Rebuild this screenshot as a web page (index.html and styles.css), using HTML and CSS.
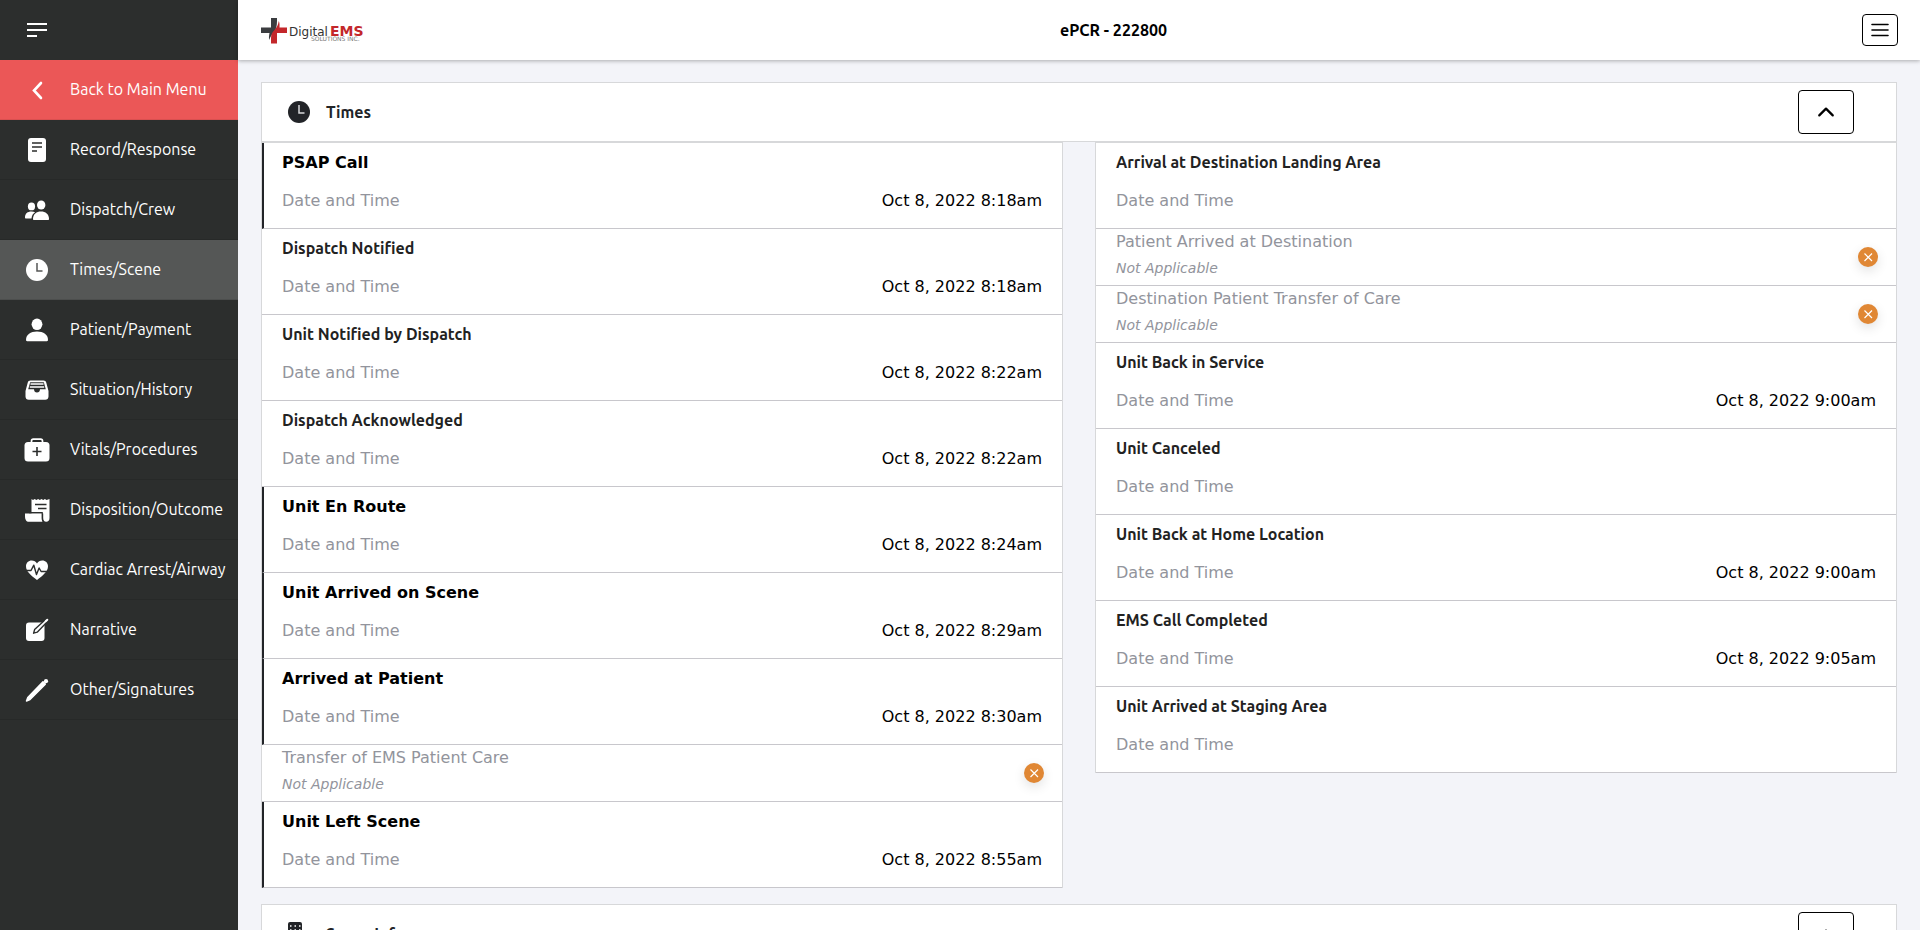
FILE: index.html
```html
<!DOCTYPE html>
<html lang="en">
<head>
<meta charset="utf-8">
<title>ePCR - 222800</title>
<link rel="stylesheet" href="styles.css">
</head>
<body>
<div class="app">
  <aside class="sidebar">
    <div class="sidebar-top">
      <button class="icon-button" type="button" aria-label="Toggle menu">
        <svg class="nav-icon" viewBox="0 0 24 24"><path d="M2 6h20M2 12h20M2 18h10" stroke="currentColor" stroke-width="2"/></svg>
      </button>
    </div>
    <nav class="nav">
      <a class="nav-item nav-back" href="#"><svg class="nav-icon" viewBox="0 0 24 24"><path d="M16 5l-7 7.500 7 7.500" fill="none" stroke="currentColor" stroke-width="2.600" stroke-linecap="round" stroke-linejoin="miter"/></svg><span class="nav-label">Back to Main Menu</span></a>
      <a class="nav-item" href="#"><svg class="nav-icon" viewBox="0 0 24 24"><rect x="3" y="0" width="18" height="24" rx="3" fill="currentColor"/><path d="M7 5h10M7 9h10M7 13h5" stroke="#2c2e2d" stroke-width="1.500"/></svg><span class="nav-label">Record/Response</span></a>
      <a class="nav-item" href="#"><svg class="nav-icon" viewBox="0 0 24 24"><g fill="currentColor"><ellipse cx="16.200" cy="7" rx="4.200" ry="4.500"/><path d="M8 21c0-5 3.500-7.500 8-7.500s8 2.500 8 7.500c0 .6-.4 1-1 1H9c-.6 0-1-.4-1-1z"/><ellipse cx="6.500" cy="8.400" rx="3.600" ry="3.900"/><path d="M0 19.500C0 15.500 2.500 13.500 6.500 13.500c1.500 0 2.600.3 3.600.8C7.800 15.700 6.800 17.800 6.500 20.500H1c-.6 0-1-.4-1-1z"/></g></svg><span class="nav-label">Dispatch/Crew</span></a>
      <a class="nav-item nav-active" href="#" aria-current="page"><svg class="nav-icon" viewBox="0 0 24 24"><circle cx="12" cy="12" r="11" fill="currentColor"/><path d="M12 5v8h5.500" fill="none" stroke="#555756" stroke-width="1.500"/></svg><span class="nav-label">Times/Scene</span></a>
      <a class="nav-item" href="#"><svg class="nav-icon" viewBox="0 0 24 24"><g fill="currentColor"><ellipse cx="12" cy="6.300" rx="5.400" ry="5.800"/><path d="M1 22c0-5.500 4.500-8.500 11-8.500S23 16.500 23 22c0 .7-.4 1.200-1.200 1.200H2.200C1.400 23.200 1 22.700 1 22z"/></g></svg><span class="nav-label">Patient/Payment</span></a>
      <a class="nav-item" href="#"><svg class="nav-icon" viewBox="0 0 24 24"><path d="M5.500 2.500h13c1.600 0 2.400.8 2.800 2.200L23.500 13v5.500c0 2-1.300 3.300-3.300 3.300H3.800c-2 0-3.300-1.300-3.300-3.300V13L2.700 4.700c.4-1.400 1.200-2.200 2.800-2.200z" fill="currentColor"/><path d="M5.200 4.200h13.600l2 7H15c0 2-1.200 3.300-3 3.300S9 13.200 9 11.200H3.200z" fill="#2c2e2d"/><path d="M5.500 6h13M4.800 9h14.400" stroke="currentColor" stroke-width="1.300"/></svg><span class="nav-label">Situation/History</span></a>
      <a class="nav-item" href="#"><svg class="nav-icon nav-icon-wide" viewBox="0 0 26 24"><path d="M7.500 5V3c0-1 .6-1.800 1.800-1.800h7.400c1.200 0 1.800.8 1.800 1.800v2" fill="none" stroke="currentColor" stroke-width="1.700"/><rect x="0.500" y="4" width="25" height="19.500" rx="3.500" fill="currentColor"/><path d="M13 9v9M8.500 13.500h9" stroke="#2c2e2d" stroke-width="1.600"/></svg><span class="nav-label">Vitals/Procedures</span></a>
      <a class="nav-item" href="#"><svg class="nav-icon" viewBox="0 0 24 24"><path d="M6.500 1l1.500 1 1.700-1 1.700 1 1.700-1 1.700 1 1.700-1 1.700 1 1.700-1 1.700 1L24.500 1v19c0 2.500-1.200 3.700-3.300 3.700s-3-1.500-3-3.700v-4.500H6.500z" fill="currentColor"/><path d="M10 6.500h11.500M13 10.500h8.500" stroke="#2c2e2d" stroke-width="1.400"/><path d="M0 15.500h17v4.800c0 1.500.3 2.500 1 3.500H4C1.200 23.800 0 21.500 0 18z" fill="currentColor"/><path d="M4 14.700h13.200v5.500c0 1.700.3 2.600 1 3.700" fill="none" stroke="#2c2e2d" stroke-width="1.200"/></svg><span class="nav-label">Disposition/Outcome</span></a>
      <a class="nav-item" href="#"><svg class="nav-icon" viewBox="0 0 24 24"><path d="M12 22C6 17.500 1 13.500 1 8.300 1 4.800 3.500 2.500 6.700 2.500c2.300 0 4.200 1 5.300 3 1.100-2 3-3 5.300-3C20.500 2.500 23 4.800 23 8.300 23 13.500 18 17.500 12 22z" fill="currentColor"/><path d="M0 12.500h6l2.800-5.300 2.700 9.300 2.600-6.500 2 3.500H24" fill="none" stroke="#2c2e2d" stroke-width="1.400" stroke-linejoin="round"/></svg><span class="nav-label">Cardiac Arrest/Airway</span></a>
      <a class="nav-item" href="#"><svg class="nav-icon" viewBox="0 0 24 24"><rect x="1" y="4.500" width="18.500" height="18.500" rx="3" fill="currentColor"/><path d="M8.600 15.200l1-3.600L20.500 1.500l2 2L12.200 14.200z" fill="currentColor" stroke="#2c2e2d" stroke-width="1.400" stroke-linejoin="round"/><path d="M20.700 3.300l1.600-1.600" stroke="currentColor" stroke-width="2" stroke-linecap="round"/></svg><span class="nav-label">Narrative</span></a>
      <a class="nav-item" href="#"><svg class="nav-icon" viewBox="0 0 24 24"><path d="M18 3.800l2.300 2.300L5 21.500l-3.500 1.500L2.800 19.500z" fill="currentColor" stroke="currentColor" stroke-width="1.500" stroke-linejoin="round"/><circle cx="21" cy="3.200" r="2.100" fill="currentColor"/></svg><span class="nav-label">Other/Signatures</span></a>
    </nav>
  </aside>
  <div class="content">
    <header class="topbar">
      <svg class="logo" viewBox="0 0 104 28" role="img" aria-label="DigitalEMS Solutions Inc.">
        <path d="M10 2h6v3c0 5-1 8.500-3 11-2 2.500-3.800 4.500-4.800 8-.6-3 0-5 .3-7H0v-5.500h10z" fill="#3b3d40"/>
        <path d="M16 27.500h-6V22c0-4 1.500-6 3.500-8C16 11.500 17 9 17.800 5c1 2.500.7 4.500.7 6.500H26V17H16z" fill="#c3272b"/>
        <text class="logo-name" x="28" y="20">Digital</text>
        <text class="logo-ems" x="69" y="20">EMS</text>
        <text class="logo-tag" x="50" y="25">SOLUTIONS INC.</text>
      </svg>
      <h1 class="page-title">ePCR - 222800</h1>
      <button class="menu-button" type="button" aria-label="Open menu">
        <svg class="menu-icon" viewBox="0 0 18 16"><path d="M1 2.500h16M1 8h16M1 13.500h16" stroke="currentColor" stroke-width="1.600" stroke-linecap="round"/></svg>
      </button>
    </header>
    <main class="main">
      <section class="panel">
        <div class="panel-head">
          <svg class="panel-icon" viewBox="0 0 24 24"><circle cx="12" cy="12" r="11" fill="#222428"/><path d="M12 5v8h5.500" fill="none" stroke="#d7d8da" stroke-width="1.500"/></svg>
          <h2 class="panel-title">Times</h2>
          <button class="collapse-button" type="button" aria-label="Collapse Times"><svg class="chevron" viewBox="0 0 16 16"><path d="M2 11l6-6 6 6" fill="none" stroke="currentColor" stroke-width="2" stroke-linecap="round" stroke-linejoin="round"/></svg></button>
        </div>
        <div class="columns">
          <div class="column">
            <div class="row required"><h3 class="row-title">PSAP Call</h3><div class="field"><span>Date and Time</span><time class="value">Oct 8, 2022 8:18am</time></div></div>
            <div class="row"><h3 class="row-title">Dispatch Notified</h3><div class="field"><span>Date and Time</span><time class="value">Oct 8, 2022 8:18am</time></div></div>
            <div class="row"><h3 class="row-title">Unit Notified by Dispatch</h3><div class="field"><span>Date and Time</span><time class="value">Oct 8, 2022 8:22am</time></div></div>
            <div class="row"><h3 class="row-title">Dispatch Acknowledged</h3><div class="field"><span>Date and Time</span><time class="value">Oct 8, 2022 8:22am</time></div></div>
            <div class="row required"><h3 class="row-title">Unit En Route</h3><div class="field"><span>Date and Time</span><time class="value">Oct 8, 2022 8:24am</time></div></div>
            <div class="row required"><h3 class="row-title">Unit Arrived on Scene</h3><div class="field"><span>Date and Time</span><time class="value">Oct 8, 2022 8:29am</time></div></div>
            <div class="row required"><h3 class="row-title">Arrived at Patient</h3><div class="field"><span>Date and Time</span><time class="value">Oct 8, 2022 8:30am</time></div></div>
            <div class="row row-na"><div class="na-text"><div class="na-title">Transfer of EMS Patient Care</div><div class="na-note">Not Applicable</div></div><button class="clear-button" type="button" aria-label="Clear"><svg class="clear-icon" viewBox="0 0 10 10"><path d="M1.500 1.500l7.500 7.500M9 1.500L1.500 9" stroke="currentColor" stroke-width="1.200"/></svg></button></div>
            <div class="row required"><h3 class="row-title">Unit Left Scene</h3><div class="field"><span>Date and Time</span><time class="value">Oct 8, 2022 8:55am</time></div></div>
          </div>
          <div class="column">
            <div class="row"><h3 class="row-title">Arrival at Destination Landing Area</h3><div class="field"><span>Date and Time</span></div></div>
            <div class="row row-na"><div class="na-text"><div class="na-title">Patient Arrived at Destination</div><div class="na-note">Not Applicable</div></div><button class="clear-button" type="button" aria-label="Clear"><svg class="clear-icon" viewBox="0 0 10 10"><path d="M1.500 1.500l7.500 7.500M9 1.500L1.500 9" stroke="currentColor" stroke-width="1.200"/></svg></button></div>
            <div class="row row-na"><div class="na-text"><div class="na-title">Destination Patient Transfer of Care</div><div class="na-note">Not Applicable</div></div><button class="clear-button" type="button" aria-label="Clear"><svg class="clear-icon" viewBox="0 0 10 10"><path d="M1.500 1.500l7.500 7.500M9 1.500L1.500 9" stroke="currentColor" stroke-width="1.200"/></svg></button></div>
            <div class="row"><h3 class="row-title">Unit Back in Service</h3><div class="field"><span>Date and Time</span><time class="value">Oct 8, 2022 9:00am</time></div></div>
            <div class="row"><h3 class="row-title">Unit Canceled</h3><div class="field"><span>Date and Time</span></div></div>
            <div class="row"><h3 class="row-title">Unit Back at Home Location</h3><div class="field"><span>Date and Time</span><time class="value">Oct 8, 2022 9:00am</time></div></div>
            <div class="row"><h3 class="row-title">EMS Call Completed</h3><div class="field"><span>Date and Time</span><time class="value">Oct 8, 2022 9:05am</time></div></div>
            <div class="row"><h3 class="row-title">Unit Arrived at Staging Area</h3><div class="field"><span>Date and Time</span></div></div>
          </div>
        </div>
      </section>
      <section class="panel">
        <div class="panel-head">
          <svg class="panel-icon" viewBox="0 0 24 24"><path d="M3 0h10a2 2 0 0 1 2 2v9h6a2 2 0 0 1 2 2v10H1V2a2 2 0 0 1 2-2z" fill="#222428"/><path d="M3 4h11M3 8h11M3 12h11" stroke="#fff" stroke-width="1.500" stroke-dasharray="1.500 3"/></svg>
          <h2 class="panel-title">Scene Info</h2>
          <button class="collapse-button" type="button" aria-label="Collapse Scene Info"><svg class="chevron" viewBox="0 0 16 16"><path d="M2 11l6-6 6 6" fill="none" stroke="currentColor" stroke-width="2" stroke-linecap="round" stroke-linejoin="round"/></svg></button>
        </div>
      </section>
    </main>
  </div>
</div>
</body>
</html>
```
FILE: styles.css
```css
* {
  box-sizing: border-box;
}

body {
  margin: 0;
  background: #f3f4f9;
  color: #000;
  font: 16px/24px "DejaVu Sans", sans-serif;
}

h1, h2, h3 {
  margin: 0;
  font-size: 16px;
}

button {
  display: flex;
  align-items: center;
  justify-content: center;
  padding: 0;
  color: inherit;
  cursor: pointer;
}

.app {
  display: flex;
  height: 100vh;
  overflow: hidden;
}

.sidebar {
  flex: none;
  width: 238px;
  background: #2c2e2d;
  color: #fff;
}

.sidebar-top {
  display: flex;
  align-items: center;
  height: 60px;
  padding-left: 25px;
}

.icon-button {
  border: 0;
  background: none;
}

.nav-icon {
  flex: none;
  width: 24px;
  height: 24px;
  overflow: visible;
}

.nav-icon-wide {
  width: 26px;
  margin: 0 -1px;
}

.nav-item {
  display: flex;
  align-items: center;
  gap: 21px;
  height: 60px;
  padding-left: 25px;
  border-bottom: 1px solid #272928;
  color: #fff;
  font-family: Ubuntu, "Noto Sans", sans-serif;
  text-decoration: none;
  white-space: nowrap;
}

.nav-label {
  padding-bottom: 2px;
}

.nav-back {
  background: #eb5757;
  border-color: #d95050;
}

.nav-active {
  background: #555756;
  border-color: #4c4e4d;
}

.content {
  display: flex;
  flex: 1;
  flex-direction: column;
  min-width: 0;
}

.topbar {
  display: flex;
  flex: none;
  align-items: center;
  justify-content: space-between;
  height: 60px;
  padding: 0 22px 0 23px;
  background: #fff;
  box-shadow: 0 1px 4px rgba(0, 0, 0, 0.3);
}

.logo {
  width: 104px;
  height: 28px;
}

.logo-name {
  fill: #333;
  font: 12px "DejaVu Sans", sans-serif;
}

.logo-ems {
  fill: #c3272b;
  font: bold 14px "DejaVu Sans", sans-serif;
}

.logo-tag {
  fill: #777;
  font: 6px "DejaVu Sans", sans-serif;
}

.page-title {
  font-family: Ubuntu, "Noto Sans", sans-serif;
}

.menu-button {
  width: 36px;
  height: 32px;
  border: 1px solid #000;
  border-radius: 4px;
  background: #fff;
}

.menu-icon {
  width: 18px;
  height: 16px;
}

.main {
  display: flex;
  flex: 1;
  flex-direction: column;
  gap: 16px;
  min-height: 0;
  padding: 22px 23px 0;
  overflow: hidden;
}

.panel {
  flex: none;
}

.panel-head {
  display: flex;
  align-items: center;
  height: 60px;
  padding: 0 42px 0 25px;
  border: 1px solid #d7d8da;
  background: #fff;
}

.panel-icon {
  width: 24px;
  height: 24px;
}

.panel-title {
  flex: 1;
  margin-left: 15px;
  color: #222428;
  font-family: Ubuntu, "Noto Sans", sans-serif;
}

.collapse-button {
  width: 56px;
  height: 44px;
  border: 1px solid #000;
  border-radius: 4px;
  background: #fff;
}

.chevron {
  width: 18px;
  height: 18px;
}

.columns {
  display: grid;
  grid-template-columns: 1fr 1fr;
  align-items: start;
  gap: 32px;
}

.column {
  border: 1px solid #d7d8da;
  border-bottom: 0;
  background: #fff;
}

.row {
  height: 86px;
  padding: 7px 20px 0;
  border-bottom: 1px solid #c8c7cc;
}

.row-title {
  color: #222;
  font-family: Ubuntu, "Noto Sans", sans-serif;
}

.field {
  display: flex;
  justify-content: space-between;
  margin-top: 15px;
  color: #92949c;
}

.required {
  padding-top: 8px;
  padding-left: 18px;
  border-left: 2px solid #222428;
}

.required .row-title {
  color: #000;
  font-family: "DejaVu Sans", sans-serif;
}

.required .field {
  margin-top: 14px;
}

.value {
  color: #000;
}

.row-na {
  display: flex;
  align-items: center;
  justify-content: space-between;
  height: 57px;
  padding-top: 0;
  padding-right: 18px;
  color: #92949c;
}

.na-text {
  padding-bottom: 6px;
}

.na-title {
  line-height: 28px;
}

.na-note {
  font-size: 14px;
  font-style: italic;
}

.clear-button {
  width: 20px;
  height: 20px;
  border: 0;
  border-radius: 50%;
  background: #e08734;
  color: #fff;
  box-shadow: 0 4px 12px rgba(0, 0, 0, 0.12);
}

.clear-icon {
  width: 10px;
  height: 10px;
}
```
